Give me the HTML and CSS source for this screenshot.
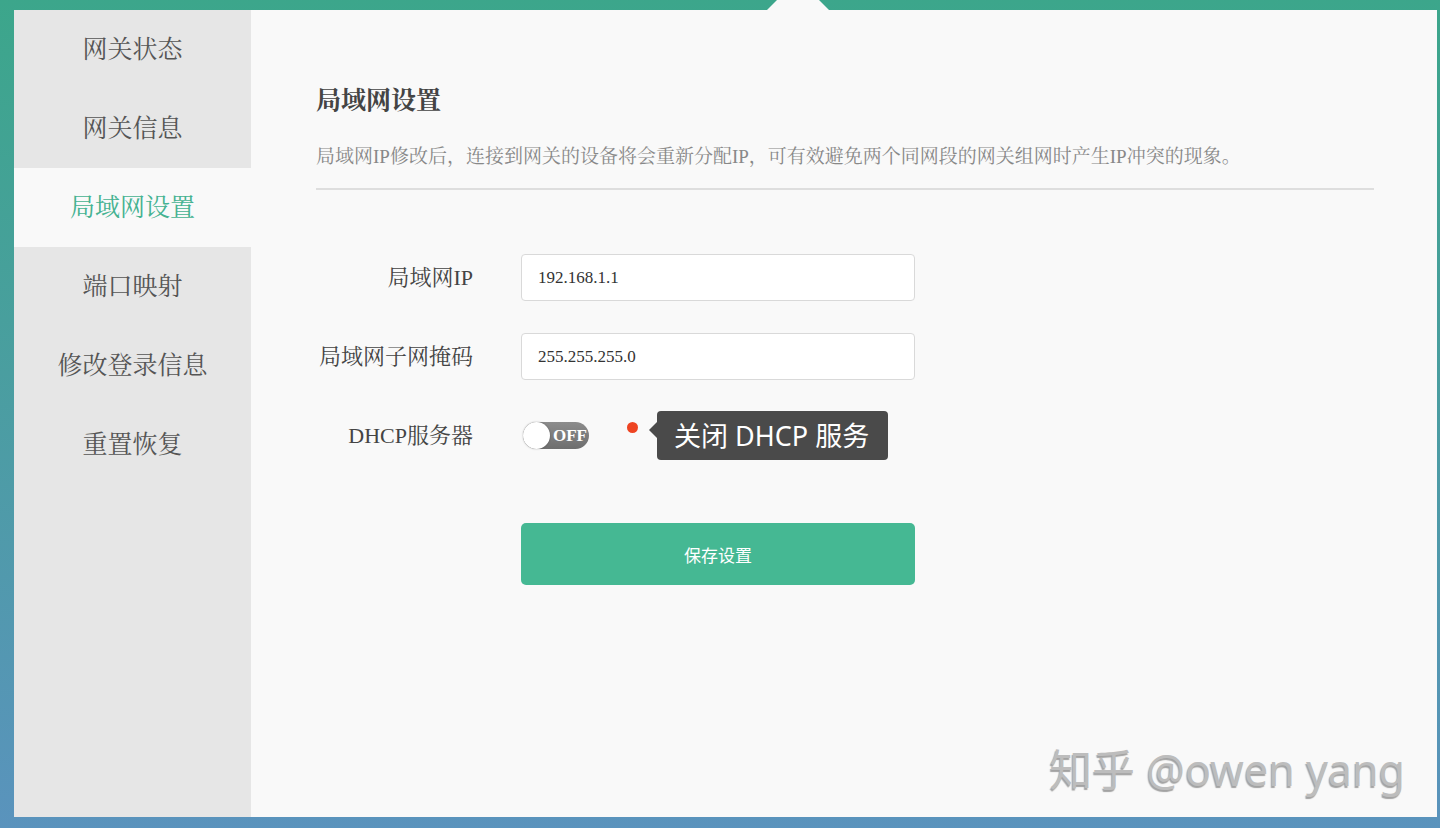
FILE: index.html
```html
<!DOCTYPE html>
<html lang="zh-CN">
<head>
  <meta charset="UTF-8" />
  <title>局域网设置</title>
  <link rel="stylesheet" href="styles.css">
</head>
<body>

  <div class="frame">
    <div class="panel">
      <span class="notch"></span>

      <ul class="menu">
        <li>网关状态</li>
        <li>网关信息</li>
        <li class="active">局域网设置</li>
        <li>端口映射</li>
        <li>修改登录信息</li>
        <li>重置恢复</li>
      </ul>

      <div class="content">
        <h2>局域网设置</h2>
        <p class="desc">局域网IP修改后，连接到网关的设备将会重新分配IP，可有效避免两个同网段的网关组网时产生IP冲突的现象。</p>

        <div class="form">
          <label>局域网IP</label>
          <input type="text" value="192.168.1.1" />

          <label>局域网子网掩码</label>
          <input type="text" value="255.255.255.0" />

          <label>DHCP服务器</label>
          <div class="dhcp">
            <div class="switch">
              <span class="knob"></span>
              <span class="state">OFF</span>
            </div>
            <span class="dot"></span>
            <div class="tip">关闭 DHCP 服务</div>
          </div>

          <span></span>
          <button>保存设置</button>
        </div>
      </div>

      <div class="watermark">知乎 @owen yang</div>
    </div>
  </div>

</body>
</html>
```

FILE: styles.css
```css
* {
  box-sizing: border-box;
}

body {
  margin: 0;
  font-family: "Liberation Serif", "Noto Serif CJK SC", "Noto Sans CJK SC", serif;
}

.frame {
  height: 828px;
  padding: 10px 3px 11px 14px;
  background: linear-gradient(180deg, #3ca68b 0%, #4a9ea0 45%, #5a93bd 100%);
}

.panel {
  position: relative;
  display: flex;
  height: 100%;
  background: #f9f9f9;
}

.notch {
  position: absolute;
  top: -31px;
  left: 753px;
  width: 0;
  height: 0;
  border-left: 31px solid transparent;
  border-right: 31px solid transparent;
  border-bottom: 31px solid #f9f9f9;
}

.menu {
  width: 237px;
  margin: 0;
  padding: 0;
  list-style: none;
  background: #e6e6e6;
}

.menu li {
  height: 79px;
  line-height: 79px;
  text-align: center;
  font-size: 25px;
  color: #555;
}

.menu li.active {
  background: #f9f9f9;
  color: #45b291;
}

.content {
  flex: 1;
  padding: 75px 63px 0 65px;
}

h2 {
  margin: 0;
  font-size: 25px;
  line-height: 32px;
  font-weight: bold;
  color: #444;
}

.desc {
  margin: 27px 0 0;
  padding-bottom: 18px;
  border-bottom: 2px solid #dedede;
  font-size: 19px;
  line-height: 26px;
  color: #888;
}

.form {
  display: grid;
  grid-template-columns: 157px 394px;
  column-gap: 48px;
  row-gap: 32px;
  margin-top: 64px;
}

.form label {
  text-align: right;
  font-size: 22px;
  line-height: 47px;
  color: #444;
  white-space: nowrap;
}

.form input {
  height: 47px;
  padding: 0 16px;
  background: #fff;
  border: 1px solid #d9d9d9;
  border-radius: 4px;
  font-family: "Liberation Serif", serif;
  font-size: 17px;
  color: #333;
}

.dhcp {
  display: flex;
  align-items: center;
  height: 47px;
  white-space: nowrap;
}

.switch {
  position: relative;
  width: 66px;
  height: 27px;
  margin-left: 2px;
  border-radius: 14px;
  background: linear-gradient(180deg, #8c8c8c, #6e6e6e);
}

.knob {
  position: absolute;
  top: 0;
  left: 0;
  width: 27px;
  height: 27px;
  border-radius: 50%;
  background: #fff;
  box-shadow: 0 0 2px rgba(0,0,0,0.3);
}

.state {
  position: absolute;
  right: 2px;
  top: 0;
  line-height: 27px;
  font-size: 17px;
  font-weight: bold;
  color: #fff;
}

.dot {
  width: 11px;
  height: 11px;
  margin: -16px 0 0 38px;
  border-radius: 50%;
  background: #ee4422;
}

.tip {
  position: relative;
  height: 49px;
  margin-left: 19px;
  padding: 0 19px 0 17px;
  border-radius: 4px;
  background: #4a4a4a;
  font-family: "Noto Sans", "Noto Sans CJK SC", sans-serif;
  font-size: 27px;
  line-height: 49px;
  color: #fff;
}

.tip::before {
  content: "";
  position: absolute;
  left: -8px;
  top: 11px;
  border-top: 8px solid transparent;
  border-bottom: 8px solid transparent;
  border-right: 8px solid #4a4a4a;
}

button {
  height: 62px;
  margin-top: 32px;
  border: none;
  border-radius: 5px;
  background: #45b893;
  color: #fff;
  font-family: "Noto Sans CJK SC", sans-serif;
  font-size: 17px;
  cursor: pointer;
}

.watermark {
  position: absolute;
  right: 32px;
  bottom: 26px;
  font-family: "Noto Sans", "Noto Sans CJK SC", sans-serif;
  font-size: 43px;
  line-height: 1;
  color: #bdbdbd;
  text-shadow: -1px 2px 1px rgba(0,0,0,0.35);
}
```
